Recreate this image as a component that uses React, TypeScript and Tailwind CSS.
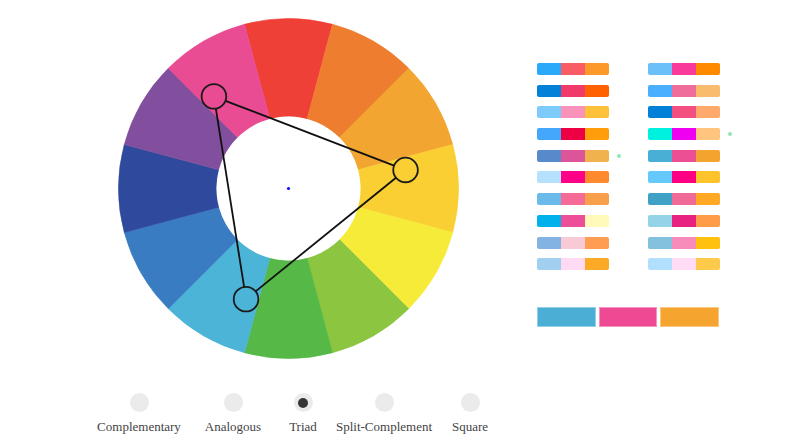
import React from "react";

const WHEEL = [
  "#EE4036",
  "#EE7D2F",
  "#F2A531",
  "#F9CF33",
  "#F6EB39",
  "#8CC540",
  "#56B847",
  "#4CB4D6",
  "#3A7CC1",
  "#2F4A9C",
  "#824F9E",
  "#EA4C93",
];

const LEFT: string[][] = [
  ["#2AA9FA", "#FA5C66", "#FB9A2B"],
  ["#0480D8", "#EF3A6A", "#FF6100"],
  ["#7CCBFC", "#F892BA", "#FFC03A"],
  ["#44A7FC", "#EE0144", "#FF9D0A"],
  ["#5889C8", "#DC5499", "#EFB24C"],
  ["#B6E1FE", "#FF0088", "#FF8A2E"],
  ["#6BBBEA", "#F56A97", "#F79F4A"],
  ["#00B1EC", "#EC4F98", "#FFFABA"],
  ["#82B3E2", "#F8CAD5", "#FF9D52"],
  ["#A0CFF0", "#FEDAF3", "#FAAA25"],
];

const RIGHT: string[][] = [
  ["#6CC0F9", "#FA3A9A", "#FF8A00"],
  ["#4AAFFE", "#EE6D9A", "#F9BB6C"],
  ["#0080D6", "#F24F80", "#FFAA6C"],
  ["#00F2DE", "#F000F0", "#FFC47E"],
  ["#4AAFD5", "#EC4F94", "#F3A42F"],
  ["#65C9FE", "#FF0085", "#FCC42A"],
  ["#3FA1C6", "#F06A97", "#FFA823"],
  ["#94D3E8", "#E8237F", "#FF9C47"],
  ["#83C1DE", "#F78BB9", "#FFC10E"],
  ["#B1DFFD", "#FFDBF4", "#FFCA4C"],
];

const SIZE = 341;
const C = SIZE / 2;
const R_OUT = 170;
const R_IN = 72;

function pt(r: number, deg: number): [number, number] {
  const a = (deg * Math.PI) / 180;
  return [C + r * Math.sin(a), C - r * Math.cos(a)];
}

function sector(a0: number, a1: number): string {
  const [x0, y0] = pt(R_OUT, a0);
  const [x1, y1] = pt(R_OUT, a1);
  const [x2, y2] = pt(R_IN, a1);
  const [x3, y3] = pt(R_IN, a0);
  return `M${x0} ${y0} A${R_OUT} ${R_OUT} 0 0 1 ${x1} ${y1} L${x2} ${y2} A${R_IN} ${R_IN} 0 0 0 ${x3} ${y3} Z`;
}

function Wheel() {
  const markers = [321, 81, 201].map((a) => pt(118.5, a));
  const mr = 12.3;
  const lines: [number, number, number, number][] = [];
  for (let i = 0; i < 3; i++) {
    const [ax, ay] = markers[i];
    const [bx, by] = markers[(i + 1) % 3];
    const d = Math.hypot(bx - ax, by - ay);
    const ux = (bx - ax) / d;
    const uy = (by - ay) / d;
    lines.push([ax + ux * mr, ay + uy * mr, bx - ux * mr, by - uy * mr]);
  }
  return (
    <svg width={SIZE} height={SIZE} viewBox={`0 0 ${SIZE} ${SIZE}`} className="block">
      {WHEEL.map((c, i) => (
        <path
          key={i}
          d={sector(i * 30 - 15, i * 30 + 15)}
          fill={c}
          stroke={c}
          strokeWidth={0.6}
        />
      ))}
      <circle cx={C} cy={C} r={R_IN} fill="#ffffff" />
      <circle cx={C} cy={C} r={1.6} fill="#1010ff" />
      {lines.map((l, i) => (
        <line
          key={i}
          x1={l[0]}
          y1={l[1]}
          x2={l[2]}
          y2={l[3]}
          stroke="#111"
          strokeWidth={1.8}
        />
      ))}
      {markers.map(([x, y], i) => (
        <circle key={i} cx={x} cy={y} r={mr} fill="none" stroke="#1a1a1a" strokeWidth={1.8} />
      ))}
    </svg>
  );
}

function Swatch({ colors }: { colors: string[] }) {
  return (
    <div className="flex w-[72px] h-[12px] rounded-[2px] overflow-hidden">
      {colors.map((c, i) => (
        <div key={i} className="w-[24px] h-full" style={{ backgroundColor: c }} />
      ))}
    </div>
  );
}

function Column({ rows, dotAt }: { rows: string[][]; dotAt: number }) {
  return (
    <div className="flex flex-col gap-y-[9.7px] w-[111px]">
      {rows.map((r, i) => (
        <div key={i} className="flex items-center">
          <Swatch colors={r} />
          {i === dotAt && (
            <div className="ml-[8px] w-[4px] h-[4px] rounded-full bg-[#8de8b3]" />
          )}
        </div>
      ))}
    </div>
  );
}

const MODES = [
  { label: "Complementary", w: "w-[84px]", ml: "ml-0" },
  { label: "Analogous", w: "w-[56px]", ml: "ml-[24px]" },
  { label: "Triad", w: "w-[30px]", ml: "ml-[27px]", active: true },
  { label: "Split-Complement", w: "w-[98px]", ml: "ml-[17px]" },
  { label: "Square", w: "w-[38px]", ml: "ml-[18px]" },
];

export default function App() {
  return (
    <div
      className="w-[795px] h-[447px] bg-white overflow-hidden flex flex-col"
      style={{ fontFamily: '"Liberation Serif", "Times New Roman", serif' }}
    >
      <div className="flex">
        <div className="pl-[118px] pt-[18px]">
          <Wheel />
        </div>
        <div className="ml-[78px] pt-[63px] flex flex-col">
          <div className="flex">
            <Column rows={LEFT} dotAt={4} />
            <Column rows={RIGHT} dotAt={3} />
          </div>
          <div className="flex gap-[3px] mt-[37px]">
            <div className="w-[58.5px] h-[20px] bg-[#4BAFD5] border border-white/40" />
            <div className="w-[58.5px] h-[20px] bg-[#EE4A93] border border-white/40" />
            <div className="w-[58.5px] h-[20px] bg-[#F5A42F] border border-white/40" />
          </div>
        </div>
      </div>
      <div className="flex pl-[97px] mt-[34px]">
        {MODES.map((m) => (
          <div key={m.label} className={`flex flex-col items-center ${m.w} ${m.ml}`}>
            <div className="w-[19px] h-[19px] rounded-full bg-[#ebebeb] flex items-center justify-center">
              {m.active && <div className="w-[10px] h-[10px] rounded-full bg-[#363636]" />}
            </div>
            <span className="mt-[7px] text-[13px] leading-[15px] text-[#444] whitespace-nowrap">
              {m.label}
            </span>
          </div>
        ))}
      </div>
    </div>
  );
}
